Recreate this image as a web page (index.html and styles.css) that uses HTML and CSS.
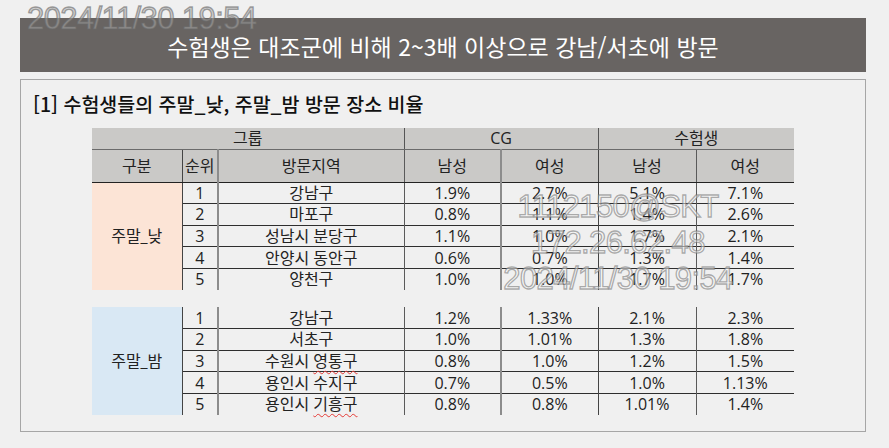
FILE: index.html
```html
<!DOCTYPE html>
<html lang="ko">
<head>
<meta charset="utf-8">
<title>수험생 방문 장소 비율</title>
<link rel="stylesheet" href="styles.css">
</head>
<body>
<div class="page">
  <header class="banner">수험생은 대조군에 비해 2~3배 이상으로 강남/서초에 방문</header>
  <section class="panel">
    <h2 class="panel-title">[1] 수험생들의 주말_낮, 주말_밤 방문 장소 비율</h2>
    <table class="data">
      <colgroup>
        <col class="c-gubun"><col class="c-rank"><col class="c-area">
        <col class="c-val"><col class="c-val"><col class="c-val2"><col class="c-val2">
      </colgroup>
      <thead>
        <tr class="h1">
          <th colspan="3">그룹</th>
          <th colspan="2" class="sep">CG</th>
          <th colspan="2" class="sep">수험생</th>
        </tr>
        <tr class="h2">
          <th>구분</th>
          <th class="v-dark">순위</th>
          <th class="v-gray">방문지역</th>
          <th class="v-mid">남성</th>
          <th class="v-gray">여성</th>
          <th class="v-dark">남성</th>
          <th class="v-mid">여성</th>
        </tr>
      </thead>
      <tbody class="block">
        <tr>
          <td rowspan="5" class="gubun day">주말_낮</td>
          <td class="v-dark">1</td><td class="v-gray">강남구</td>
          <td class="v-mid">1.9%</td><td class="v-gray">2.7%</td><td class="v-dark">5.1%</td><td class="v-mid">7.1%</td>
        </tr>
        <tr class="ln">
          <td class="v-dark">2</td><td class="v-gray">마포구</td>
          <td class="v-mid">0.8%</td><td class="v-gray">1.1%</td><td class="v-dark">1.4%</td><td class="v-mid">2.6%</td>
        </tr>
        <tr class="ln">
          <td class="v-dark">3</td><td class="v-gray">성남시 분당구</td>
          <td class="v-mid">1.1%</td><td class="v-gray">1.0%</td><td class="v-dark">1.7%</td><td class="v-mid">2.1%</td>
        </tr>
        <tr class="ln">
          <td class="v-dark">4</td><td class="v-gray">안양시 동안구</td>
          <td class="v-mid">0.6%</td><td class="v-gray">0.7%</td><td class="v-dark">1.3%</td><td class="v-mid">1.4%</td>
        </tr>
        <tr class="ln">
          <td class="v-dark">5</td><td class="v-gray">양천구</td>
          <td class="v-mid">1.0%</td><td class="v-gray">1.0%</td><td class="v-dark">1.7%</td><td class="v-mid">1.7%</td>
        </tr>
      </tbody>
      <tbody>
        <tr class="spacer"><td colspan="7"></td></tr>
      </tbody>
      <tbody class="block">
        <tr>
          <td rowspan="5" class="gubun night">주말_밤</td>
          <td class="v-dark">1</td><td class="v-gray">강남구</td>
          <td class="v-mid">1.2%</td><td class="v-gray">1.33%</td><td class="v-dark">2.1%</td><td class="v-mid">2.3%</td>
        </tr>
        <tr class="ln">
          <td class="v-dark">2</td><td class="v-gray">서초구</td>
          <td class="v-mid">1.0%</td><td class="v-gray">1.01%</td><td class="v-dark">1.3%</td><td class="v-mid">1.8%</td>
        </tr>
        <tr class="ln">
          <td class="v-dark">3</td><td class="v-gray">수원시 <span class="typo">영통구</span></td>
          <td class="v-mid">0.8%</td><td class="v-gray">1.0%</td><td class="v-dark">1.2%</td><td class="v-mid">1.5%</td>
        </tr>
        <tr class="ln">
          <td class="v-dark">4</td><td class="v-gray">용인시 수지구</td>
          <td class="v-mid">0.7%</td><td class="v-gray">0.5%</td><td class="v-dark">1.0%</td><td class="v-mid">1.13%</td>
        </tr>
        <tr class="ln">
          <td class="v-dark">5</td><td class="v-gray">용인시 <span class="typo">기흥구</span></td>
          <td class="v-mid">0.8%</td><td class="v-gray">0.8%</td><td class="v-dark">1.01%</td><td class="v-mid">1.4%</td>
        </tr>
      </tbody>
    </table>
  </section>
</div>
<div class="wm wm-top">2024/11/30 19:54</div>
<div class="wm wm-center">1112150@SKT<br>172.26.62.48<br>2024/11/30 19:54</div>
</body>
</html>
```

FILE: styles.css
```css
* { box-sizing: border-box; }

html, body {
  margin: 0;
  padding: 0;
  background: #f0f0f0;
}

body {
  width: 889px;
  height: 448px;
  overflow: hidden;
  position: relative;
  font-family: "Open Sans", "Noto Sans CJK KR", sans-serif;
  color: #222;
}

.page {
  padding: 18px 23px 0 20px;
}

.banner {
  height: 54px;
  background: #686462;
  color: #ffffff;
  display: flex;
  align-items: center;
  justify-content: center;
  font-family: "Noto Sans CJK KR", sans-serif;
  font-size: 23px;
  padding-top: 1px;
}

.panel {
  margin-top: 7px;
  height: 353px;
  border: 1px solid #a6a6a6;
  padding: 10px 12px 0 12px;
}

.panel-title {
  margin: 0;
  font-family: "Noto Sans CJK KR", sans-serif;
  font-size: 19.5px;
  font-weight: 500;
  line-height: 28px;
  color: #111;
}

.data {
  margin: 10px 0 0 59px;
  border-collapse: collapse;
  table-layout: fixed;
  width: 702px;
  font-size: 16px;
  text-align: center;
}

.c-gubun { width: 90px; }
.c-rank { width: 36px; }
.c-area { width: 186px; }
.c-val { width: 97px; }
.c-val2 { width: 98px; }

.data th, .data td {
  padding: 0;
  font-weight: 400;
  white-space: nowrap;
  line-height: 20px;
}

.data thead th {
  background: #cac9c7;
  color: #222;
}

.h1 th {
  height: 21px;
  border-bottom: 1px solid #6b6b6b;
}

.h1 th.sep {
  border-left: 1px solid #555;
}

.h2 th {
  height: 33px;
  border-bottom: 1px solid #222;
}

.block td {
  height: 21.6px;
}

.block tr.ln td {
  border-top: 1px solid #2e2e2e;
}

.v-dark { border-left: 1px solid #444; }
.v-mid { border-left: 1px solid #5a5a5a; }
.v-gray { border-left: 2px solid #8c8c8c; }

.gubun.day { background: #fce4d6; }
.gubun.night { background: #d9e8f4; }

.spacer td {
  height: 17px;
  border: none;
}

.typo {
  text-decoration: underline wavy #e53935;
  text-decoration-thickness: 1px;
  text-underline-offset: 3px;
}

.wm {
  position: absolute;
  font-family: "Liberation Sans", Arial, sans-serif;
  font-size: 31px;
  letter-spacing: -0.6px;
  line-height: 1;
  pointer-events: none;
  white-space: nowrap;
}

.wm-top {
  left: 27px;
  top: 3px;
  color: rgba(175, 175, 175, 0.55);
  -webkit-text-stroke: 1.3px rgba(105, 105, 105, 0.6);
}

.wm-center {
  left: 488px;
  top: 189px;
  width: 260px;
  text-align: center;
  line-height: 36px;
  color: rgba(255, 255, 255, 0.5);
  -webkit-text-stroke: 1.3px rgba(120, 120, 120, 0.6);
}
```
